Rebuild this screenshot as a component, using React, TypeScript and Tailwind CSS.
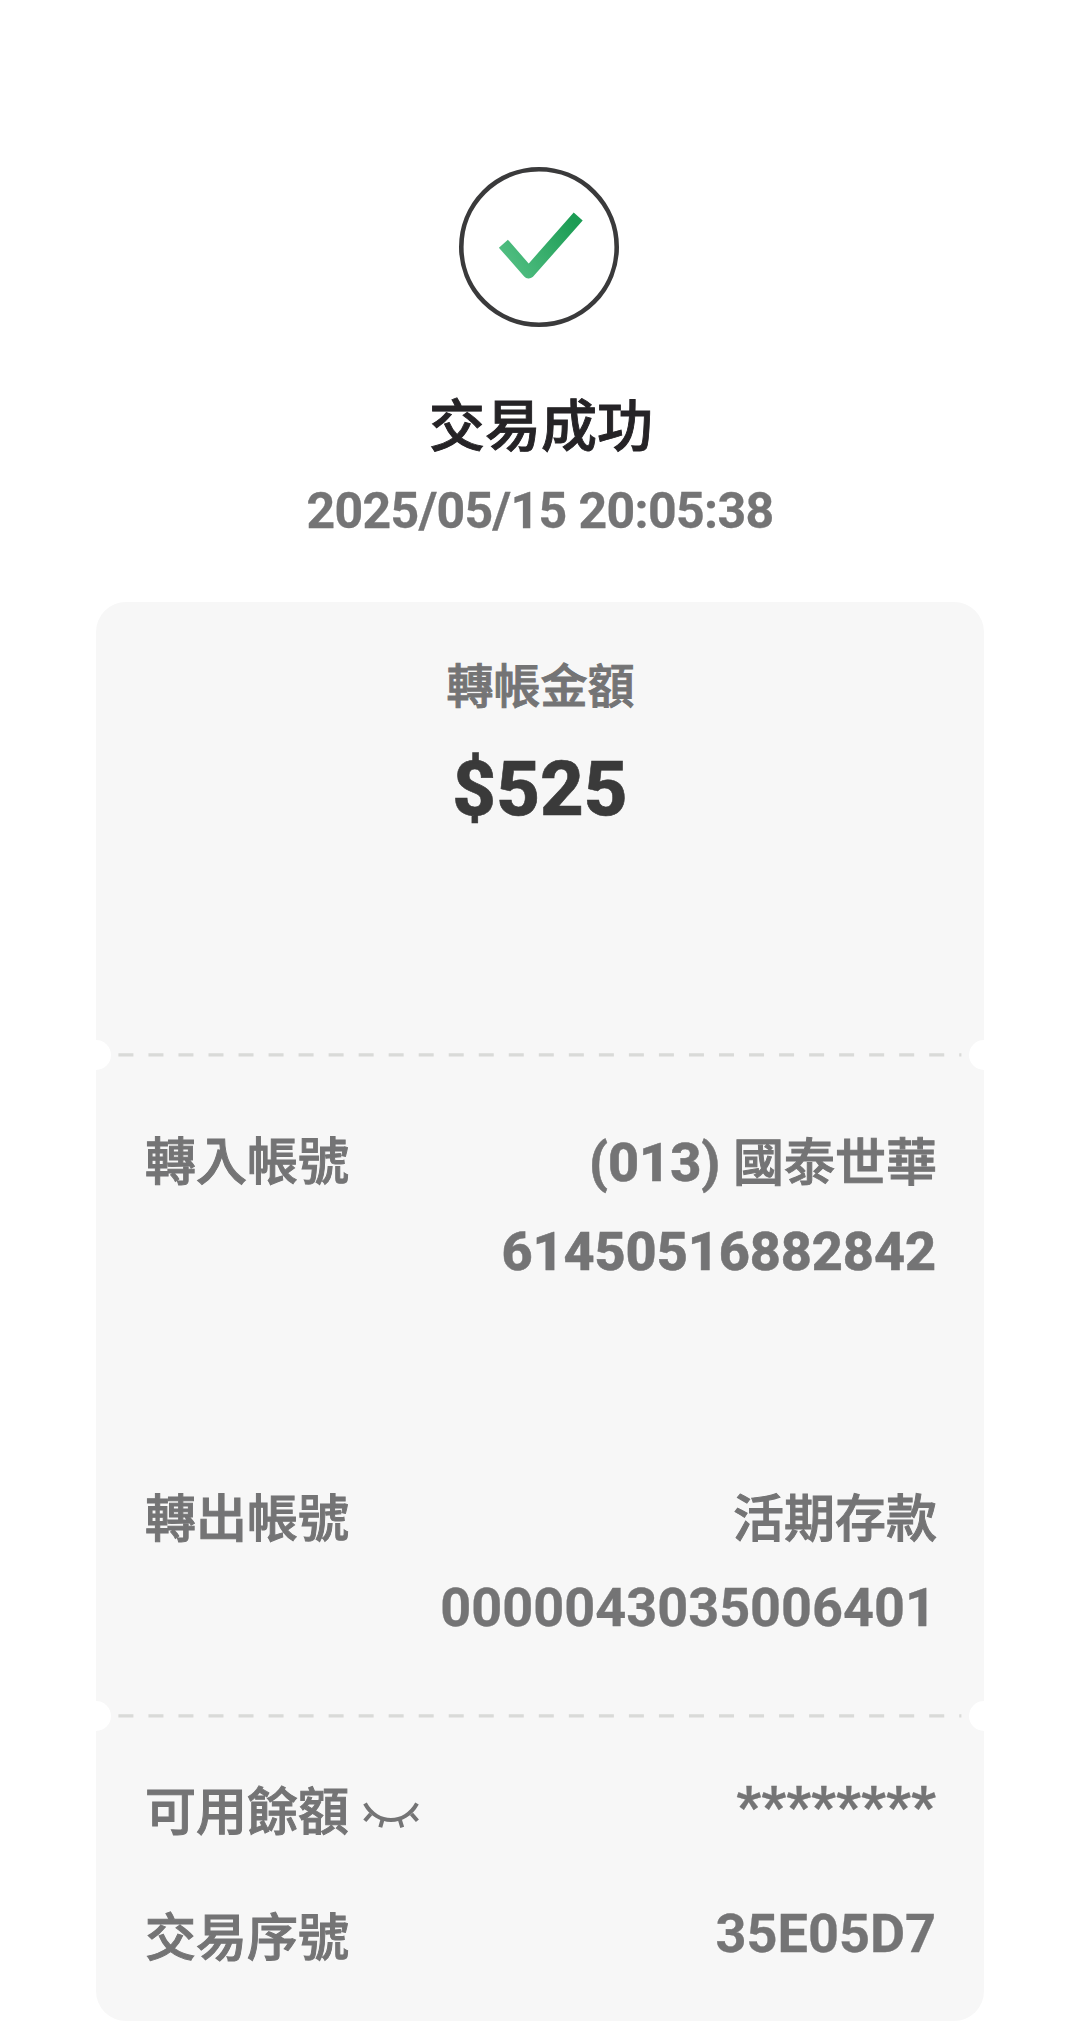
import React from "react";
import clsx from "clsx";

interface RowProps {
    label: string;
    icon?: React.ReactNode;
    className?: string;
    children: React.ReactNode;
}

const Row: React.FC<RowProps> = ({label, icon, className, children}) => (
    <div className={clsx("flex justify-between pr-[47px] pl-[49px] text-[51px] font-medium", className)}>
        <div className="flex h-[88px] items-center gap-[13px]">
            <span className="[-webkit-text-stroke:1px]">{label}</span>
            {icon}
        </div>
        <div className="text-right">{children}</div>
    </div>
);

// Dashed tear line with a notch on each side
const TearLine = () => (
    <div className="flex h-[32px] items-center overflow-hidden">
        <span className="-ml-[15px] size-[30px] shrink-0 rounded-full bg-white"/>
        <svg className="ml-[7px] h-[4px] w-[844px] shrink-0" viewBox="0 0 844 4">
            <line x1="0.4" y1="1.8" x2="843.4" y2="1.8" stroke="#d9dad8" strokeWidth="3.2" strokeDasharray="15 15.03"/>
        </svg>
        <span className="-mr-[15px] ml-auto size-[30px] shrink-0 rounded-full bg-white"/>
    </div>
);

const ClosedEye = () => (
    <svg className="mt-1 h-[30px] w-[58px]" viewBox="0 0 58 30" fill="none" stroke="#747475" strokeWidth="4">
        <path d="M3 3.5C15 25.5 43 25.5 55 3.5"/>
        <path d="M8.7 14L2.8 20.8M20.5 19.5L18.3 27.3M37.8 19.5L40.2 27.3M49.5 14L55.4 20.8"/>
    </svg>
);

const SuccessMark = () => (
    <svg className="mr-[2px] size-[160px]" viewBox="0 0 160 160" fill="none">
        <defs>
            <linearGradient id="tick" x1="48" y1="92" x2="112" y2="50" gradientUnits="userSpaceOnUse">
                <stop stopColor="#4fbd80"/>
                <stop offset="1" stopColor="#1c9c54"/>
            </linearGradient>
        </defs>
        <circle cx="80" cy="80" r="77.7" stroke="#3a3a3b" strokeWidth="4.6"/>
        <path d="M44.4 76.7L69.7 105.6L119.2 49.5" stroke="url(#tick)" strokeWidth="12" strokeLinejoin="round"/>
    </svg>
);

const App: React.FC = () => (
    <main className="min-h-[2042px] bg-white px-24 pt-[167px] font-['Roboto','Noto_Sans_CJK_TC',sans-serif] text-[#747475]">
        <header className="flex flex-col items-center">
            <SuccessMark/>
            <h1 className="mt-[60px] pl-[2px] text-[56px] leading-[80px] font-medium text-[#252326] [-webkit-text-stroke:0.9px]">交易成功</h1>
            <p className="mt-2 text-[50px] leading-[72px] font-bold tracking-[-0.65px] [-webkit-text-stroke:0.3px]">2025/05/15 20:05:38</p>
        </header>
        <section className="mt-[55px] h-[1419px] rounded-[30px] bg-[#f7f7f7]">
            <div className="flex h-[437px] flex-col items-center pt-[50px]">
                <p className="pl-px text-[47px] leading-[70px] font-medium [-webkit-text-stroke:1px]">轉帳金額</p>
                <p className="mt-[17px] text-[76px] leading-[100px] font-extrabold text-[#3a3a3a] [-webkit-text-stroke:0.6px]">$525</p>
            </div>
            <TearLine/>
            <Row label="轉入帳號" className="h-[357px] pt-[48px]">
                <p className="leading-[88px] [-webkit-text-stroke:1px]">
                    <b className="text-[54px] font-extrabold [-webkit-text-stroke:0.5px]">(013)</b> 國泰世華
                </p>
                <p className="pr-px text-[54px] leading-[88px] font-extrabold tracking-[-0.1px] [-webkit-text-stroke:0.5px]">61450516882842</p>
            </Row>
            <Row label="轉出帳號" className="h-[272px] pt-[48px]">
                <p className="leading-[88px] [-webkit-text-stroke:1px]">活期存款</p>
                <p className="pr-px text-[54px] leading-[88px] font-bold [-webkit-text-stroke:0.3px]">0000043035006401</p>
            </Row>
            <TearLine/>
            <Row label="可用餘額" icon={<ClosedEye/>} className="h-[126px] pt-[37px]">
                <p className="pr-px text-[55px] leading-[76px] font-bold [-webkit-text-stroke:0.3px]">********</p>
            </Row>
            <Row label="交易序號" className="pt-[37px]">
                <p className="pr-px text-[54px] leading-[78px] font-bold [-webkit-text-stroke:0.3px]">35E05D7</p>
            </Row>
        </section>
    </main>
);

export default App;
